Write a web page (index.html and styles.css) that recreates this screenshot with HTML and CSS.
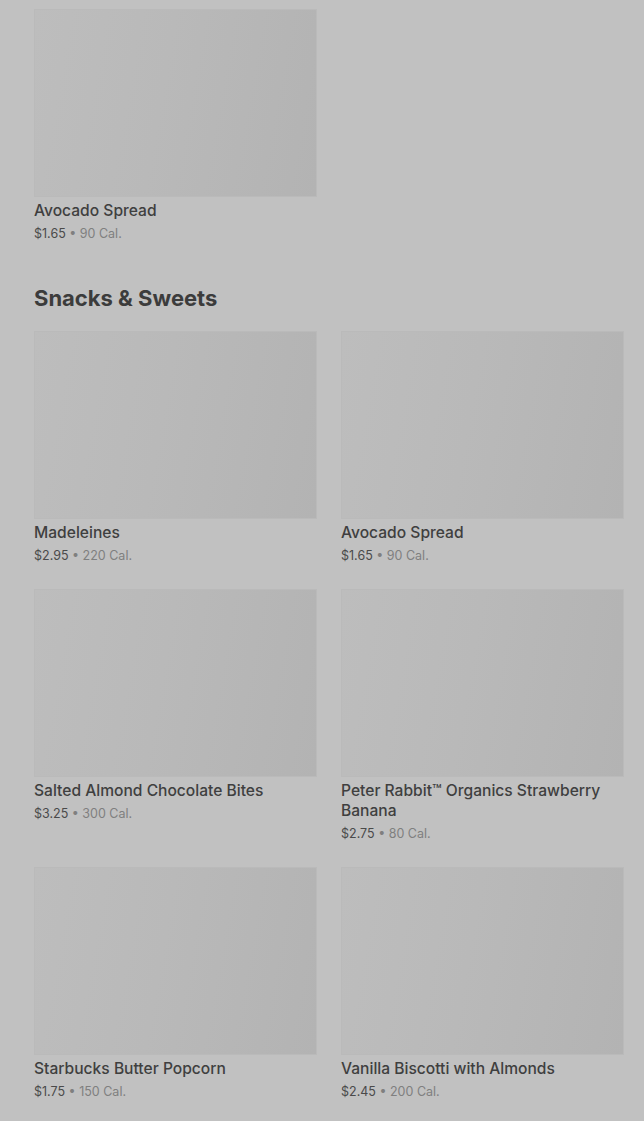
FILE: index.html
```html
<!DOCTYPE html>
<html lang="en">
<head>
  <meta charset="UTF-8">
  <title>Menu</title>
  <link rel="stylesheet" href="styles.css">
</head>
<body>
  <div class="container">
    <!-- previous section (tail) -->
    <section class="menu-section first">
      <div class="item-grid">
        <div class="item">
          <div class="thumb"></div>
          <div class="name">Avocado Spread</div>
          <div class="meta"><span class="price">$1.65</span> • <span class="cal">90 Cal.</span></div>
        </div>
      </div>
    </section>

    <!-- Snacks & Sweets -->
    <section class="menu-section">
      <h2>Snacks &amp; Sweets</h2>
      <div class="item-grid">
        <div class="item">
          <div class="thumb"></div>
          <div class="name">Madeleines</div>
          <div class="meta"><span class="price">$2.95</span> • <span class="cal">220 Cal.</span></div>
        </div>
        <div class="item">
          <div class="thumb"></div>
          <div class="name">Avocado Spread</div>
          <div class="meta"><span class="price">$1.65</span> • <span class="cal">90 Cal.</span></div>
        </div>
        <div class="item">
          <div class="thumb"></div>
          <div class="name">Salted Almond Chocolate Bites</div>
          <div class="meta"><span class="price">$3.25</span> • <span class="cal">300 Cal.</span></div>
        </div>
        <div class="item">
          <div class="thumb"></div>
          <div class="name">Peter Rabbit™ Organics Strawberry Banana</div>
          <div class="meta"><span class="price">$2.75</span> • <span class="cal">80 Cal.</span></div>
        </div>
        <div class="item">
          <div class="thumb"></div>
          <div class="name">Starbucks Butter Popcorn</div>
          <div class="meta"><span class="price">$1.75</span> • <span class="cal">150 Cal.</span></div>
        </div>
        <div class="item">
          <div class="thumb"></div>
          <div class="name">Vanilla Biscotti with Almonds</div>
          <div class="meta"><span class="price">$2.45</span> • <span class="cal">200 Cal.</span></div>
        </div>
      </div>
    </section>
  </div>
</body>
</html>
```

FILE: styles.css
```css
/* reset */
body {
  margin: 0;
  background: #c1c1c1;
  font-family: Inter, "Noto Sans", sans-serif;
  color: #3f3f3f;
}

.container {
  padding: 9px 20px 0 34px;
}

/* === sections === */
.menu-section h2 {
  margin: 0 0 19px;
  font-size: 22px;
  line-height: 28px;
  font-weight: 700;
  color: #3c3c3c;
}
.menu-section.first {
  margin-bottom: 41px;
}

.item-grid {
  display: grid;
  grid-template-columns: repeat(2, 1fr);
  column-gap: 24px;
  row-gap: 24px;
}

/* === item card === */
.thumb {
  height: 186px;
  background: linear-gradient(100deg, #bdbdbd 0%, #b9b9b9 45%, #b3b3b3 100%);
  border: 1px solid #bababa;
}
.name {
  margin-top: 4px;
  font-size: 15.6px;
  line-height: 20px;
  font-weight: 500;
  color: #3f3f3f;
}
.meta {
  margin-top: 4px;
  font-size: 12.5px;
  line-height: 18px;
  color: #7f7f7f;
}
.meta .price {
  color: #4a4a4a;
}
```
